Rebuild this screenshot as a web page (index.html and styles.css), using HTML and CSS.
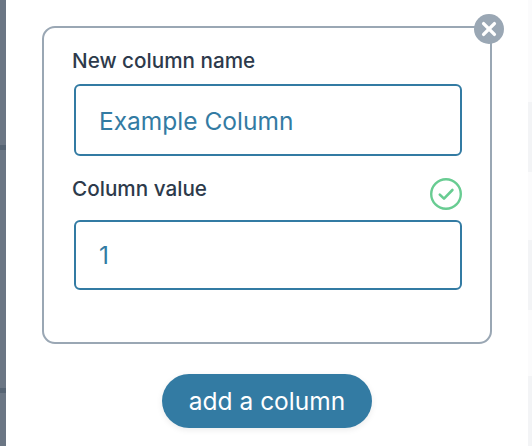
FILE: index.html
```html
<!DOCTYPE html>
<html lang="en">
<head>
<meta charset="utf-8">
<title>Add a column</title>
<link rel="stylesheet" href="styles.css">
</head>
<body>
<div class="page">
  <div class="backdrop-left">
    <div class="left-row row-a"></div>
    <div class="left-line"></div>
    <div class="left-row row-b"></div>
    <div class="left-line"></div>
    <div class="left-row row-c"></div>
  </div>
  <main class="modal">
    <form class="card">
      <button type="button" class="close" aria-label="Close">
        <svg viewBox="0 0 30 30" width="30" height="30"><circle cx="15" cy="15" r="15" fill="#9aa7b4"/><path d="M9.6 9.6 20.4 20.4M20.4 9.6 9.6 20.4" stroke="#fff" stroke-width="3.4" stroke-linecap="round"/></svg>
      </button>
      <div class="label-row"><label class="label">New column name</label></div>
      <div class="field">Example Column</div>
      <div class="label-row second">
        <label class="label">Column value</label>
        <svg class="check" viewBox="0 0 32 32" width="32" height="32"><circle cx="16" cy="16" r="14.8" fill="none" stroke="#68cc92" stroke-width="2.4"/><path d="M9.8 16.6 14 20.6 22.4 12" fill="none" stroke="#68cc92" stroke-width="2.6" stroke-linecap="round" stroke-linejoin="round"/></svg>
      </div>
      <div class="field short">1</div>
    </form>
    <button type="button" class="submit">add a column</button>
  </main>
  <div class="backdrop-right">
    <div class="band plain h102"></div>
    <div class="band shade h70"></div>
    <div class="band plain h68"></div>
    <div class="band shade h70"></div>
    <div class="band plain h66"></div>
    <div class="band shade h70"></div>
  </div>
</div>
</body>
</html>
```
FILE: styles.css
```css
* { box-sizing: border-box; }
html, body { margin: 0; padding: 0; background: #fff; }
body { width: 532px; height: 446px; overflow: hidden; font-family: Inter, "Liberation Sans", sans-serif; }
.page { display: flex; width: 532px; height: 446px; }
.backdrop-left { width: 6px; display: flex; flex-direction: column; background: #6b7684; }
.left-row { background: #6b7684; }
.row-a { height: 145px; }
.row-b { height: 238px; }
.row-c { flex: 1; }
.left-line { height: 5px; background: #566473; }
.modal { width: 522px; background: #fff; display: flex; flex-direction: column; align-items: flex-start; padding: 26px 0 0 36px; }
.card { position: relative; width: 450px; height: 318px; border: 2px solid #9aa7b4; border-radius: 13px; padding: 18px 0 0 28px; }
.close { position: absolute; top: -14px; right: -14px; width: 30px; height: 30px; padding: 0; border: 0; background: none; display: block; }
.close svg { display: block; }
.label-row { display: flex; justify-content: space-between; align-items: flex-start; width: 390px; height: 30px; }
.second { height: 48px; margin-top: 16px; }
.label { font-size: 20.7px; font-weight: 500; line-height: 30px; color: #2d3a4b; }
.second .label { margin-top: 2px; }
.check { margin-top: 6px; }
.field { margin: 8px 0 0 2px; width: 388px; height: 72px; border: 2px solid #337ba3; border-radius: 6px; padding: 0 0 0 23px; font-size: 24.5px; line-height: 71px; color: #337ba3; }
.short { height: 70px; line-height: 67px; }
.second + .field { margin-top: 0; }
.submit { margin: 30px 0 0 120px; width: 210px; height: 54px; border: 0; border-radius: 27px; background: #337ba3; color: #fff; font-family: inherit; font-size: 24.5px; font-weight: 400; padding: 0; box-shadow: 0 2px 6px rgba(0,0,0,.08); }
.backdrop-right { width: 4px; display: flex; flex-direction: column; }
.band { flex: none; }
.plain { background: #fbfbfc; }
.shade { background: #f3f4f6; }
.h102 { height: 102px; }
.h70 { height: 70px; }
.h68 { height: 68px; }
.h66 { height: 66px; }
```
